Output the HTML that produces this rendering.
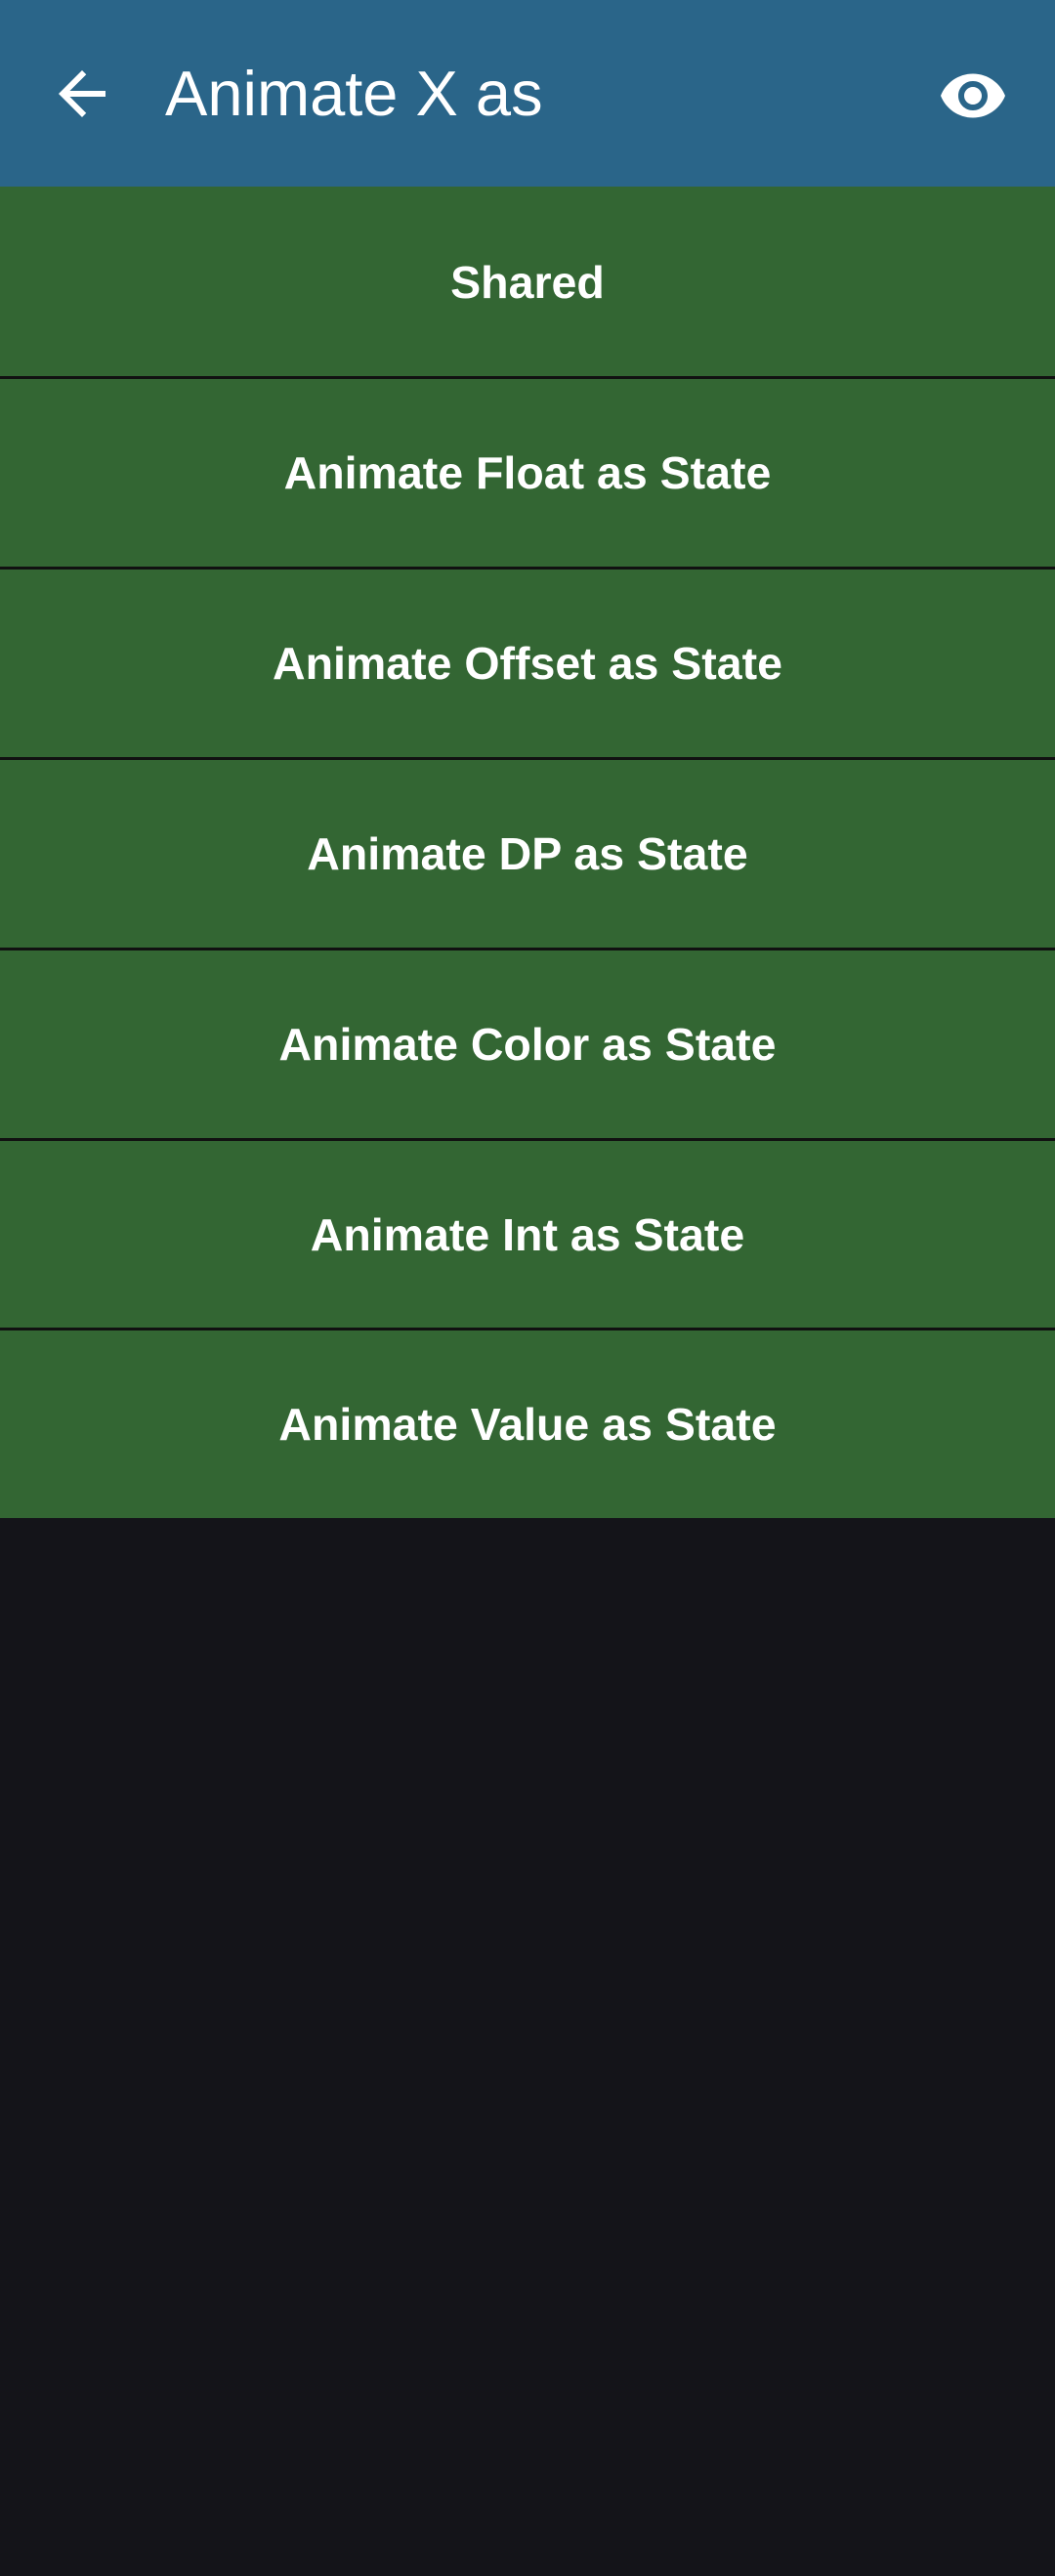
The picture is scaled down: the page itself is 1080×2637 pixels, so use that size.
<!DOCTYPE html>
<html><head><meta charset="utf-8"><style>
body{margin:0;width:1080px;height:2637px;background:#141419;font-family:"Liberation Sans",sans-serif;overflow:hidden}
.hd{position:absolute;left:0;top:0;width:1080px;height:191px;background:#2a6589}
.t{position:absolute;left:169px;top:60px;font-size:65px;color:#fff;line-height:72px}
.row{position:absolute;left:0;width:1080px;height:195px;background:#336633;color:#fff;font-size:46.5px;font-weight:bold;display:flex;align-items:center;justify-content:center;box-sizing:border-box}
.row.d{border-top:3px solid #111}
</style></head><body>
<div class="hd">
<svg style="position:absolute;left:48px;top:60px" width="72" height="72" viewBox="0 0 24 24"><path d="M20 11H7.83l5.59-5.59L12 4l-8 8 8 8 1.41-1.41L7.83 13H20v-2z" fill="#fff"/></svg>
<div class="t">Animate X as</div>
<svg style="position:absolute;left:960px;top:62px" width="72" height="72" viewBox="0 0 24 24"><path d="M12 4.5C7 4.5 2.73 7.61 1 12c1.73 4.39 6 7.5 11 7.5s9.27-3.11 11-7.5c-1.73-4.39-6-7.5-11-7.5zM12 17c-2.76 0-5-2.24-5-5s2.240-5 5-5 5 2.24 5 5-2.24 5-5 5zm0-8c-1.66 0-3 1.34-3 3s1.34 3 3 3 3-1.34 3-3-1.34-3-3-3z" fill="#fff"/></svg>
</div>
<div class="row" style="top:191px">Shared</div>
<div class="row d" style="top:385px">Animate Float as State</div>
<div class="row d" style="top:580px">Animate Offset as State</div>
<div class="row d" style="top:775px">Animate DP as State</div>
<div class="row d" style="top:970px">Animate Color as State</div>
<div class="row d" style="top:1165px">Animate Int as State</div>
<div class="row d" style="top:1359px">Animate Value as State</div>
</body></html>
